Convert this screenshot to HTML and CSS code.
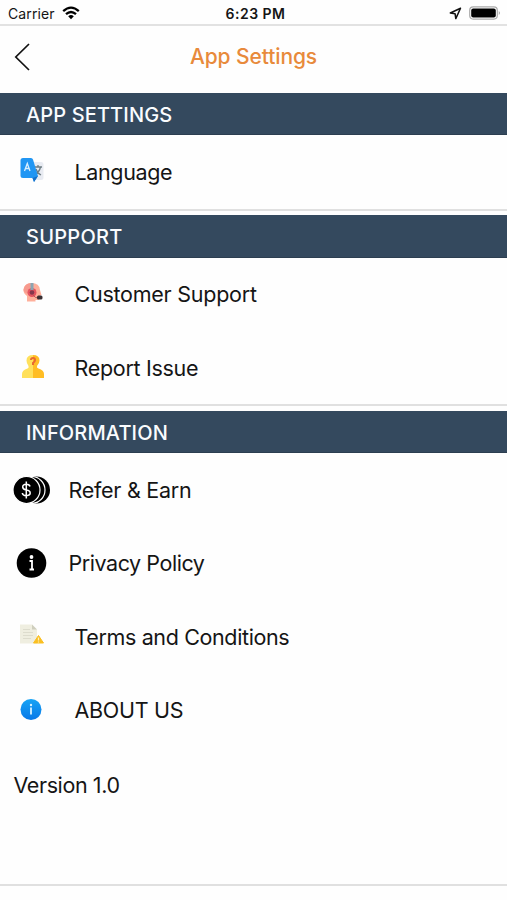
FILE: index.html
```html
<!DOCTYPE html>
<html lang="en">
<head>
<meta charset="utf-8">
<title>App Settings</title>
<link rel="stylesheet" href="styles.css">
</head>
<body>
<div class="status">
  <div class="status-left"><span>Carrier</span>
    <svg width="18" height="14" viewBox="0 0 18 14" fill="none" stroke="#000" stroke-width="2.3"><path d="M1.2 5.1Q9-1.9 16.8 5.1M4 8.2Q9 3.7 14 8.2"/><path d="M6.2 10.2Q9 7.8 11.800 10.200L9 13.200Z" fill="#000" stroke="none"/></svg>
  </div>
  <div class="time">6:23 PM</div>
  <div class="status-right">
    <svg width="13" height="13" viewBox="0 0 13 13" fill="none" stroke="#111" stroke-width="1.5" stroke-linejoin="round"><path d="M11.500 1.300 1.300 6l4.800.8.700 4.800Z"/></svg>
    <svg width="32" height="14" viewBox="0 0 32 14"><rect x=".7" y=".9" width="27.600" height="12.200" rx="3.500" fill="#fff" stroke="#aaa" stroke-width="1.200"/><rect x="2.200" y="2.400" width="24.600" height="9.200" rx="2" fill="#000"/><path d="M29.800 5q2 2 0 4Z" fill="#999"/></svg>
  </div>
</div>
<header class="nav">
  <svg class="back" width="17" height="30" viewBox="0 0 17 30" fill="none" stroke="#111" stroke-width="1.700"><path d="M15 2 1.800 15 15 28"/></svg>
  <h1>App Settings</h1>
</header>
<main>
  <section class="card">
    <h2 class="h-app">APP SETTINGS</h2>
    <div class="row"><span class="icon">
      <svg width="24" height="26" viewBox="0 0 24 26"><path d="M11 5h10q2.500 0 2.500 2.500v13q0 2.500-2.500 2.500h-7Z" fill="#e8ebf2"/><path d="M14 10h8M18 8v2M20.500 10q-1 5-6 8M16 12q1 4 5 6" stroke="#6d7d84" stroke-width="1.300" fill="none"/><path d="M3 1h8q1.500 0 2 1.500L18 19l-4 6-1.500-4H3q-2.500 0-2.500-2.500V3.500Q.5 1 3 1Z" fill="#2196f3"/><path d="m14 25-1.500-4 5.500-2Z" fill="#1670c8"/><path d="m4.500 14 2.800-7.500L10 14M5.500 11.500h3.700" stroke="#d9efff" stroke-width="1.300" fill="none"/></svg>
    </span><span class="label language">Language</span></div>
  </section>
  <section class="card">
    <h2 class="h-sup">SUPPORT</h2>
    <div class="row"><span class="icon">
      <svg width="24" height="24" viewBox="0 0 24 24"><path d="M7 21.500V16Q3 13 3.500 9.500 4.500 3 11.500 3q8 0 8.500 7l1.500 5-2 1v2.500q0 1.500-2 1.500h-2v1.500Z" fill="#ffb09b"/><path d="M3.500 10Q4.500 3.500 10.500 3v11q-6 0-7-4Z" fill="#f79a8e"/><circle cx="12" cy="12.500" r="4.500" fill="#e5535f"/><circle cx="12" cy="12.500" r="2.300" fill="#85374c"/><path d="M12 3v7" stroke="#8aa5b2" stroke-width="3"/><path d="M13 15q2 3 5 3" stroke="#b85557" fill="none"/><rect x="17" y="15.500" width="5.500" height="4" rx="1.500" fill="#3b3033"/></svg>
    </span><span class="label customer">Customer Support</span></div>
    <div class="row"><span class="icon">
      <svg width="24" height="26" viewBox="0 0 24 26"><path d="M2 25v-4q0-4 5.500-5.500Q9 15 8.500 13q-2-2.500-2-5.500 0-5.500 6.500-5.500v23Z" fill="#ffe05b"/><path d="M13 2q6.500 0 6.500 5.500 0 3-2.500 5.500-.5 2 1.500 2.500Q24 17 24 21v4H13Z" fill="#ffbd24"/><path d="M11 7q0-2 2-2t2 2q0 1.500-2 3v2" stroke="#e96831" stroke-width="2" fill="none"/></svg>
    </span><span class="label report">Report Issue</span></div>
  </section>
  <section class="card info">
    <h2 class="h-info">INFORMATION</h2>
    <div class="row wide"><span class="icon">
      <svg width="38" height="28" viewBox="0 0 38 28"><circle cx="23.500" cy="14" r="13.500"/><circle cx="18.500" cy="14" r="13.500" stroke="#fff" stroke-width="1.200"/><circle cx="13.500" cy="14" r="13.500" stroke="#fff" stroke-width="1.200"/><path d="M17 10.500Q16.500 8.300 13.300 8.300q-3.600 0-3.600 2.800 0 2.300 3.600 2.900 3.900.6 3.900 3t-3.900 2.700q-3.600 0-4-2.700M13.300 5.500v17" fill="none" stroke="#fff" stroke-width="1.500"/></svg>
    </span><span class="label refer">Refer &amp; Earn</span></div>
    <div class="row wide"><span class="icon">
      <svg width="38" height="30" viewBox="0 0 38 30"><circle cx="18.500" cy="15" r="14.800"/><circle cx="18.500" cy="9" r="1.900" fill="#fff"/><path d="M16.500 13h2.500v8.500M16.500 21.500h4.500" stroke="#fff" stroke-width="1.800" fill="none"/></svg>
    </span><span class="label privacy">Privacy Policy</span></div>
    <div class="row"><span class="icon">
      <svg width="26" height="24" viewBox="0 0 26 24"><path d="M0 1.500h12l5 5v14H0Z" fill="#efeee0"/><path d="m12 1.500 5 5h-5Z" fill="#cfcebd"/><path d="M3 6.500h7M3 9.500h10M3 12.500h10M3 15.500h8" stroke="#dddccd"/><path d="m18.500 12.500 5 7.500H13.500Z" fill="#fabf21" stroke="#fabf21" stroke-linejoin="round"/><path d="M18.500 14.500v3M18.500 18.500v1" stroke="#fff2b8" stroke-width="1.300"/></svg>
    </span><span class="label terms">Terms and Conditions</span></div>
    <div class="row"><span class="icon">
      <svg width="24" height="24" viewBox="0 0 24 24"><defs><linearGradient id="blue" x2="0" y2="1"><stop stop-color="#17a4f5"/><stop offset="1" stop-color="#0878e8"/></linearGradient></defs><circle cx="11" cy="13.500" r="10.500" fill="url(#blue)"/><circle cx="11" cy="9" r="1.200" fill="#d8f2ff"/><path d="M11 11.500v7" stroke="#d8f2ff" stroke-width="1.800"/></svg>
    </span><span class="label about">ABOUT US</span></div>
    <div class="version"><span class="ver">Version 1.0</span></div>
  </section>
</main>
</body>
</html>
```
FILE: styles.css
```css
* { box-sizing: border-box; }
body { margin: 0; height: 900px; overflow: hidden; background: #fefefe; color: #151515; font-family: Inter, "Liberation Sans", sans-serif; }
svg { display: block; flex: none; }
.status { height: 25.500px; display: grid; grid-template-columns: 1fr auto 1fr; align-items: center; padding: 3px 6px 0 8px; border-bottom: 2px solid #e2e2e2; font-size: 14px; }
.status-left, .status-right { display: flex; align-items: center; gap: 7px; letter-spacing: .1px; }
.status-right { justify-content: flex-end; }
.time { font-weight: 600; letter-spacing: .5px; transform: translateX(1px); }
.nav { height: 67.300px; display: grid; grid-template-columns: 40px 1fr 40px; align-items: center; padding: 0 14px 4px; }
h1 { margin: 0; text-align: center; color: #e88a3b; font-size: 21px; line-height: 28px; font-weight: 500; letter-spacing: -.1px; }
main { display: flex; flex-direction: column; gap: 4.300px; }
.card { border-bottom: 2px solid #e0e0e0; background: #fefefe; }
h2 { margin: 0; height: 42.700px; line-height: 44px; padding-left: 26px; background: #34495e; color: #fafcff; font-size: 20px; font-weight: 500; border-bottom: 1px solid #2c3e50; }
.h-app { letter-spacing: .13px; }
.h-sup { letter-spacing: .25px; }
.h-info { letter-spacing: .15px; }
.row { height: 73.300px; display: flex; align-items: center; padding-left: 20px; }
.icon { width: 54.500px; flex: none; margin-top: -4px; }
.wide { padding-left: 13px; }
.wide .icon { width: 55.500px; margin-top: 0; }
.label, .version { font-size: 21.500px; line-height: 28px; white-space: nowrap; }
.language { letter-spacing: -.37px; }
.customer { letter-spacing: -.25px; }
.report { letter-spacing: -.3px; }
.refer { letter-spacing: -.27px; }
.privacy { letter-spacing: -.45px; }
.terms { letter-spacing: -.37px; }
.about { letter-spacing: -.3px; }
.ver { letter-spacing: -.4px; }
.info { height: 475px; }
.version { padding: 24px 0 0 13.500px; }
```
